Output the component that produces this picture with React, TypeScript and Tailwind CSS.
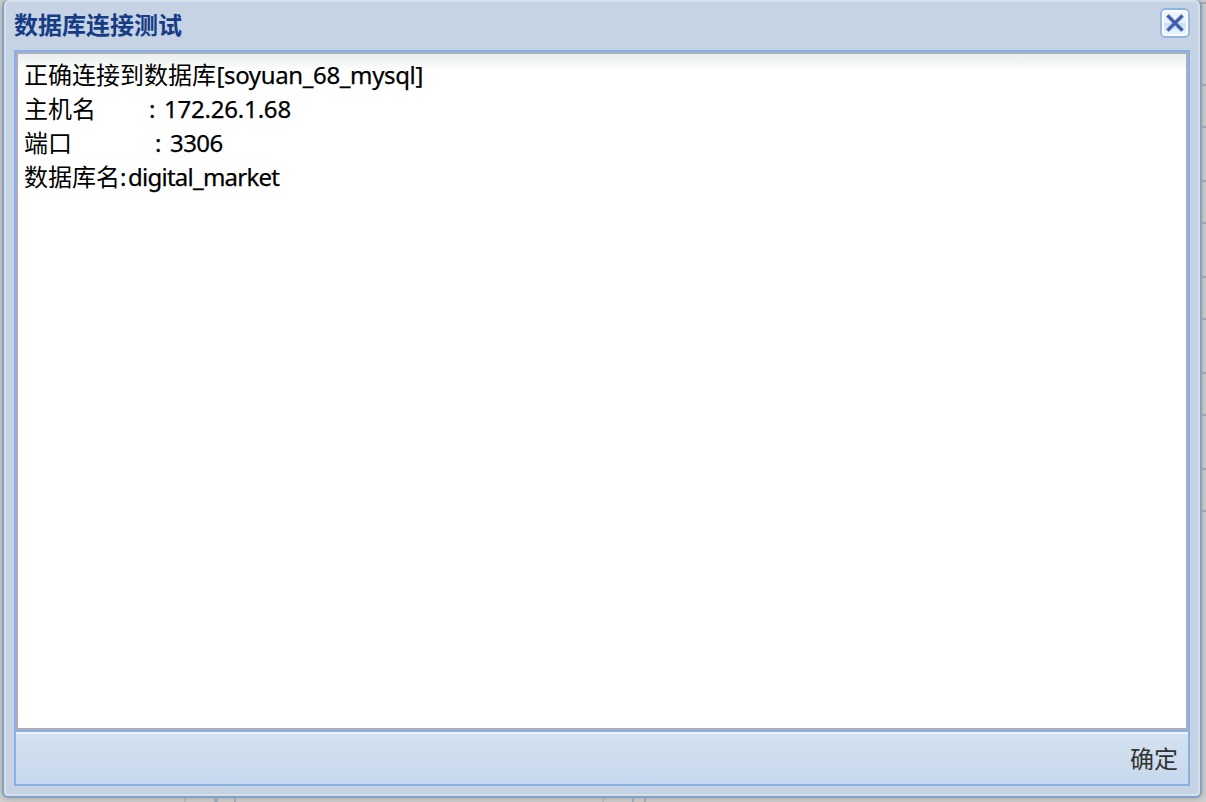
const ROWS = [2, 84, 126, 180, 222, 276, 318, 372, 414, 468, 510];

const CloseIcon = () => (
    <svg width="30" height="30" viewBox="0 0 30 30" className="block">
        <defs>
            <linearGradient id="closeFill" x1="0" y1="0" x2="0" y2="1">
                <stop offset="0" stopColor="#f0f6ff" />
                <stop offset="0.48" stopColor="#e6f0ff" />
                <stop offset="0.5" stopColor="#c8dffb" />
                <stop offset="1" stopColor="#e6f5ff" />
            </linearGradient>
        </defs>
        <rect x="1" y="1" width="28" height="28" rx="4.5" fill="#fff" stroke="#8db5e6" strokeWidth="1.8" />
        <rect x="4" y="4" width="22" height="22" rx="2" fill="url(#closeFill)" />
        <path d="M7.5 7.5L22.5 22.5M22.5 7.5L7.5 22.5" stroke="#8fa8da" strokeWidth="4.2" />
        <path d="M7.5 7.5L22.5 22.5M22.5 7.5L7.5 22.5" stroke="#435ba6" strokeWidth="2.8" />
    </svg>
);

// Slices of the page behind the dialog that show past its edges
const Backdrop = () => (
    <div className="absolute inset-0 bg-[#d2d1d0]">
        {ROWS.map(top => (
            <div key={top} className="absolute right-0 h-[2px] w-[6px] bg-[#a9a8b0]" style={{ top }} />
        ))}
        <div className="absolute bottom-0 left-[184px] h-[5px] w-[2px] bg-[#bdbdbf]" />
        <div className="absolute bottom-0 left-[214px] h-[5px] w-[4px] bg-[#9aaccb]" />
        <div className="absolute bottom-0 left-[234px] h-[5px] w-[2px] bg-[#9aaccb]" />
        <div className="absolute bottom-0 left-[602px] h-[5px] w-[2px] bg-[#bdbdbf]" />
        <div className="absolute bottom-0 left-[632px] h-[5px] w-[2px] bg-[#9aaccb]" />
        <div className="absolute bottom-0 left-[644px] h-[5px] w-[2px] bg-[#a5a7b6]" />
    </div>
);

export default function App() {
    return (
        <div className="relative h-[802px] w-[1206px] overflow-hidden font-['Noto_Sans','Noto_Sans_CJK_SC',sans-serif]">
            <Backdrop />
            <div className="relative ml-[2px] flex h-[798px] w-[1200px] flex-col rounded-[6px] border-2 border-t-0 border-[#839fc2] bg-[#c6d3e4] px-[10px] pb-[10px] shadow-[inset_0_0_0_2px_#d4e0ec,0_0_8px_#a0a0a0]">
                <div className="flex h-[50px] shrink-0 items-center justify-between">
                    <h1 className="text-2xl leading-[50px] font-bold text-[#153c85]">数据库连接测试</h1>
                    <button aria-label="关闭" className="mb-[4px]">
                        <CloseIcon />
                    </button>
                </div>
                <div className="flex flex-1 flex-col border-2 border-[#8ab0e2]">
                    <div className="flex-1 border-2 border-[#abaebf] bg-white bg-linear-to-b from-[#e9eeee] to-white to-[18px] px-[6px] pt-[4px] text-2xl leading-[34px] text-black">
                        <p className="flex h-[34px] whitespace-nowrap [&>span+span]:[-webkit-text-stroke:0.25px]">
                            <span>正确连接到数据库</span>
                            <span className="ml-[0.5px] tracking-[-0.36px]">[soyuan_68_mysql]</span>
                        </p>
                        <p className="flex h-[34px] [&>span+span]:[-webkit-text-stroke:0.25px]">
                            <span className="w-[125px]">主机名</span>
                            <span className="w-[15px]">:</span>
                            <span className="tracking-[-0.2px]">172.26.1.68</span>
                        </p>
                        <p className="flex h-[34px] [&>span+span]:[-webkit-text-stroke:0.25px]">
                            <span className="w-[131px]">端口</span>
                            <span className="w-[15px]">:</span>
                            <span className="tracking-[-0.55px]">3306</span>
                        </p>
                        <p className="flex h-[34px] whitespace-nowrap [&>span+span]:[-webkit-text-stroke:0.25px]">
                            <span>数据库名</span>
                            <span className="w-[8px]">:</span>
                            <span className="tracking-[-0.75px]">digital_market</span>
                        </p>
                    </div>
                    <div className="flex h-[54px] items-center justify-end border-t-2 border-[#8ab0e2] bg-linear-to-b from-[#d5e3f2] via-[#cedeee] via-45% to-[#c8d8ee] pt-[2px] pr-[10px] shadow-[inset_0_2px_0_#edf4fa]">
                        <button className="text-2xl leading-[34px] text-[#333333]">确定</button>
                    </div>
                </div>
            </div>
        </div>
    );
}
